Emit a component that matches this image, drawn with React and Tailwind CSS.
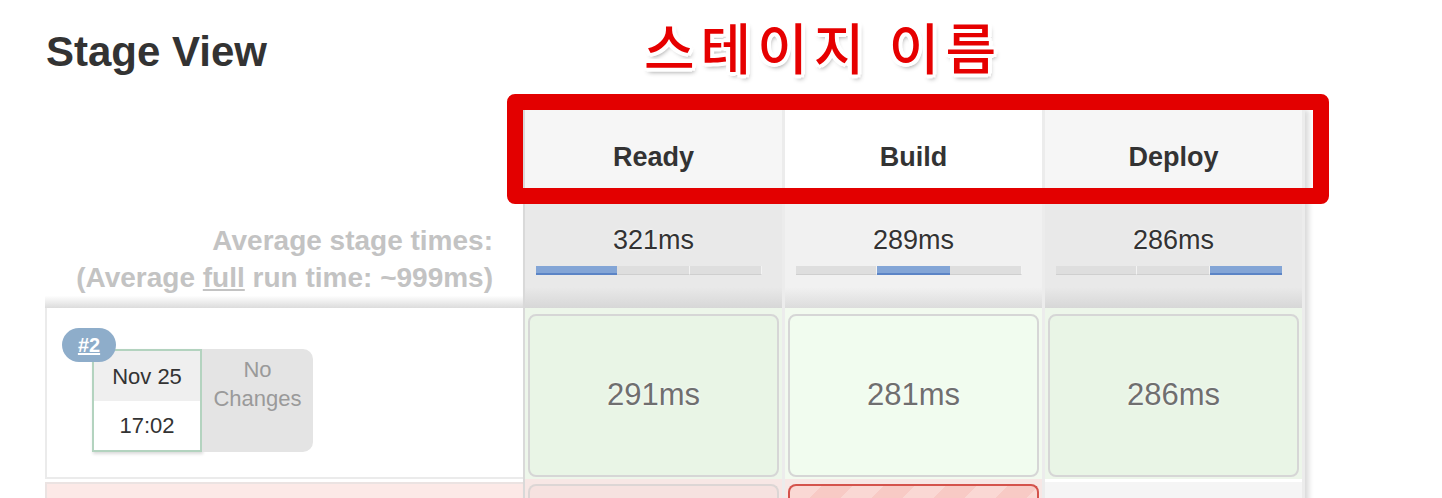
const stages = [
  { name: 'Ready', avg: '321ms', run: '291ms', head: 'bg-[#f6f6f6]', avgBg: 'bg-[linear-gradient(to_bottom,#e9e9e9_80%,#d7d7d7)]', area: 'bg-[#edf6ea]', cell: 'bg-[#e9f5e6]' },
  { name: 'Build', avg: '289ms', run: '281ms', head: 'bg-white', avgBg: 'bg-[linear-gradient(to_bottom,#f1f1f1_80%,#dcdcdc)]', area: 'bg-[#f2faef]', cell: 'bg-[#f1fcef]' },
  { name: 'Deploy', avg: '286ms', run: '286ms', head: 'bg-[#f6f6f6]', avgBg: 'bg-[linear-gradient(to_bottom,#e9e9e9_80%,#d7d7d7)]', area: 'bg-[#edf6ea]', cell: 'bg-[#e9f5e6]' },
];

// segment widths of the average bar, one blue per column
const segments = [81, 73, 72];

function AvgBar({ active }) {
  return (
    <div className="ml-[11px] mt-[10px] flex h-[9px] w-[226px]">
      {segments.map((w, i) => (
        <div
          key={i}
          style={{ width: w }}
          className={
            i === active
              ? 'h-full border-b-2 border-[#5b84c6] bg-[#83a5d6]'
              : 'h-full border-r border-b border-r-[#f3f3f3] border-b-[#cfcfcf] bg-[#dedede]'
          }
        />
      ))}
    </div>
  );
}

function StageColumn({ stage, index }) {
  const last = index === 2;
  return (
    <div className="flex w-[260px] flex-col border-r-[3px] border-[#ececec]">
      <div className={`flex h-[94px] items-center justify-center text-[27px] font-bold text-[#333] ${stage.head}`}>
        {stage.name}
      </div>
      <div className={`h-[104px] pt-[20px] ${stage.avgBg}`}>
        <div className="text-center text-[27px] leading-[32px] text-[#333] [text-shadow:0_0_3px_#fff]">{stage.avg}</div>
        <AvgBar active={index} />
      </div>
      <div className={`h-[171px] px-[3px] pt-[6px] pb-[2px] ${stage.area}`}>
        <div
          className={`flex h-full items-center justify-center rounded-[8px] border-2 border-[#d6d6d6] text-[31px] text-[#6f6f6f] [text-shadow:0_0_3px_#fff] ${stage.cell}`}
        >
          {stage.run}
        </div>
      </div>
      {index === 0 && (
        <div className="h-[40px] bg-[#f7e7e5] px-[3px] pt-[5px]">
          <div className="h-full rounded-t-[8px] border-2 border-b-0 border-[#dcd6d5] bg-[#f6e2e0]" />
        </div>
      )}
      {index === 1 && (
        <div className="h-[40px] bg-[#f7e7e5] px-[3px] pt-[5px]">
          <div className="h-full rounded-t-[8px] border-2 border-b-0 border-[#d4534c] bg-[repeating-linear-gradient(135deg,#fad8d4_0px,#fad8d4_22px,#f8cac5_22px,#f8cac5_44px)]" />
        </div>
      )}
      {last && <div className="mt-[3px] h-[40px] bg-[#f5f5f5]" />}
    </div>
  );
}

export default function App() {
  return (
    <div className="relative h-[498px] w-full overflow-hidden bg-white font-['Liberation_Sans',Arial,sans-serif]">
      <div className="h-[110px] pl-[46px] pt-[31px]">
        <h2 className="text-[42px] font-bold leading-none text-[#333]">Stage View</h2>
      </div>

      <div className="flex pl-[45px]">
        {/* left column: labels and build info */}
        <div className="flex w-[478px] flex-col">
          <div className="h-[94px]" />
          <div className="h-[104px] bg-[linear-gradient(to_bottom,#fff_88%,#dcdcdc)] pl-[2px] pr-[30px] pt-[18px] text-right text-[28px] font-bold leading-[37px] text-[#c3c3c3]">
            <div>Average stage times:</div>
            <div>
              (Average <span className="underline">full</span> run time: ~999ms)
            </div>
          </div>
          <div className="relative h-[171px] border-b-2 border-l-2 border-[#ebebeb] bg-white pl-[45px] pt-[41px]">
            <div className="absolute left-[15px] top-[20px] z-10 flex h-[34px] w-[54px] items-center justify-center rounded-full bg-[#8eadca] text-[20px] font-bold text-white underline">
              #2
            </div>
            <div className="flex">
              <div className="flex h-[103px] w-[110px] flex-col border-2 border-[#b3d3bf] bg-white text-[22px] text-[#333] shadow-[1px_2px_3px_rgba(0,0,0,0.15)]">
                <div className="flex h-[50px] items-center justify-center bg-[#efefef]">Nov 25</div>
                <div className="flex flex-1 items-center justify-center">17:02</div>
              </div>
              <div className="h-[103px] w-[111px] rounded-r-[10px] bg-[#e4e4e4] pt-[6px] text-center text-[22px] leading-[29px] text-[#9a9a9a]">
                <div>No</div>
                <div>Changes</div>
              </div>
            </div>
          </div>
          <div className="mt-[3px] h-[40px] border-l-2 border-t-2 border-[#ebe3e2] bg-[#fce9e7]" />
        </div>

        {/* stage columns */}
        <div className="flex border-l-2 border-[#d9d9d9] shadow-[4px_0_5px_rgba(0,0,0,0.14)]">
          {stages.map((stage, i) => (
            <StageColumn key={stage.name} stage={stage} index={i} />
          ))}
        </div>
      </div>

      {/* annotation overlay */}
      <div className="absolute left-[823px] top-[18px] -translate-x-1/2 whitespace-nowrap font-['Noto_Sans_CJK_KR',sans-serif] text-[55px] font-medium leading-none tracking-[6px] text-[#e60000] [text-shadow:4px_0_0_#fff,-4px_0_0_#fff,0_4px_0_#fff,0_-4px_0_#fff,3px_3px_0_#fff,-3px_-3px_0_#fff,3px_-3px_0_#fff,-3px_3px_0_#fff,2px_4px_5px_rgba(0,0,0,0.45)]">
        스테이지 이름
      </div>
      <div className="absolute left-[507px] top-[94px] h-[110px] w-[822px] rounded-[8px] border-[16px] border-[#e30000]" />
    </div>
  );
}
